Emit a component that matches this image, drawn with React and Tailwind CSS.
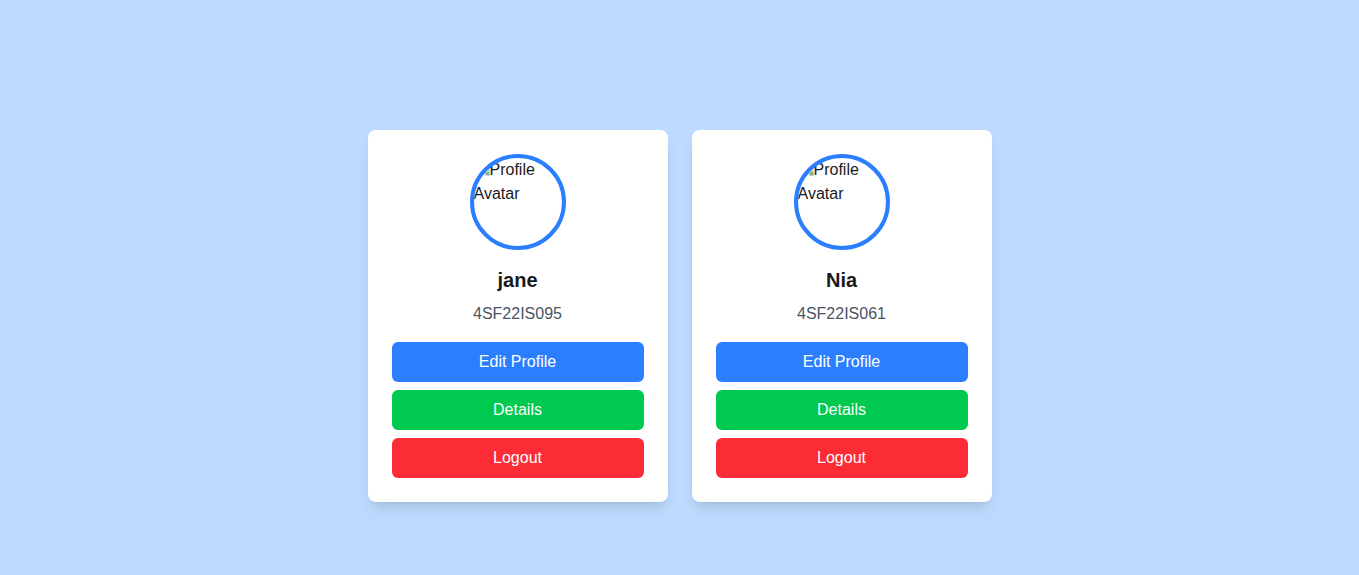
import React from "react";

const users = [
  { name: "jane", id: "4SF22IS095" },
  { name: "Nia", id: "4SF22IS061" },
];

function Avatar() {
  return (
    <div className="w-24 h-24 rounded-full border-4 border-[#2b7fff] overflow-hidden mb-4 text-[#1a1a1a] text-base leading-6">
      <span className="inline-flex items-end justify-end w-4 h-4 align-[-2px]">
        <svg width="16" height="16" viewBox="0 0 16 16">
          <rect x="11" y="9" width="5" height="6" fill="#c9d3c9" />
          <rect x="12" y="11" width="3" height="3" fill="#7fb27f" />
        </svg>
      </span>
      Profile Avatar
    </div>
  );
}

function Card({ name, id }) {
  return (
    <div className="w-[300px] bg-white rounded-lg shadow-lg p-6 flex flex-col items-center">
      <Avatar />
      <h2 className="text-xl font-bold text-[#1a1a1a] leading-7">{name}</h2>
      <p className="mt-2 text-base text-[#4a5565] leading-6">{id}</p>
      <div className="mt-4 w-full flex flex-col gap-2">
        <button className="w-full h-10 rounded-md bg-[#2b7fff] text-white text-base">Edit Profile</button>
        <button className="w-full h-10 rounded-md bg-[#00c950] text-white text-base">Details</button>
        <button className="w-full h-10 rounded-md bg-[#fb2c36] text-white text-base">Logout</button>
      </div>
    </div>
  );
}

export default function App() {
  return (
    <div
      className="min-h-screen bg-[#bedbff] flex justify-center items-start gap-6 pt-[130px]"
      style={{ fontFamily: '"Liberation Sans", Arial, sans-serif' }}
    >
      {users.map((u) => (
        <Card key={u.id} {...u} />
      ))}
    </div>
  );
}
